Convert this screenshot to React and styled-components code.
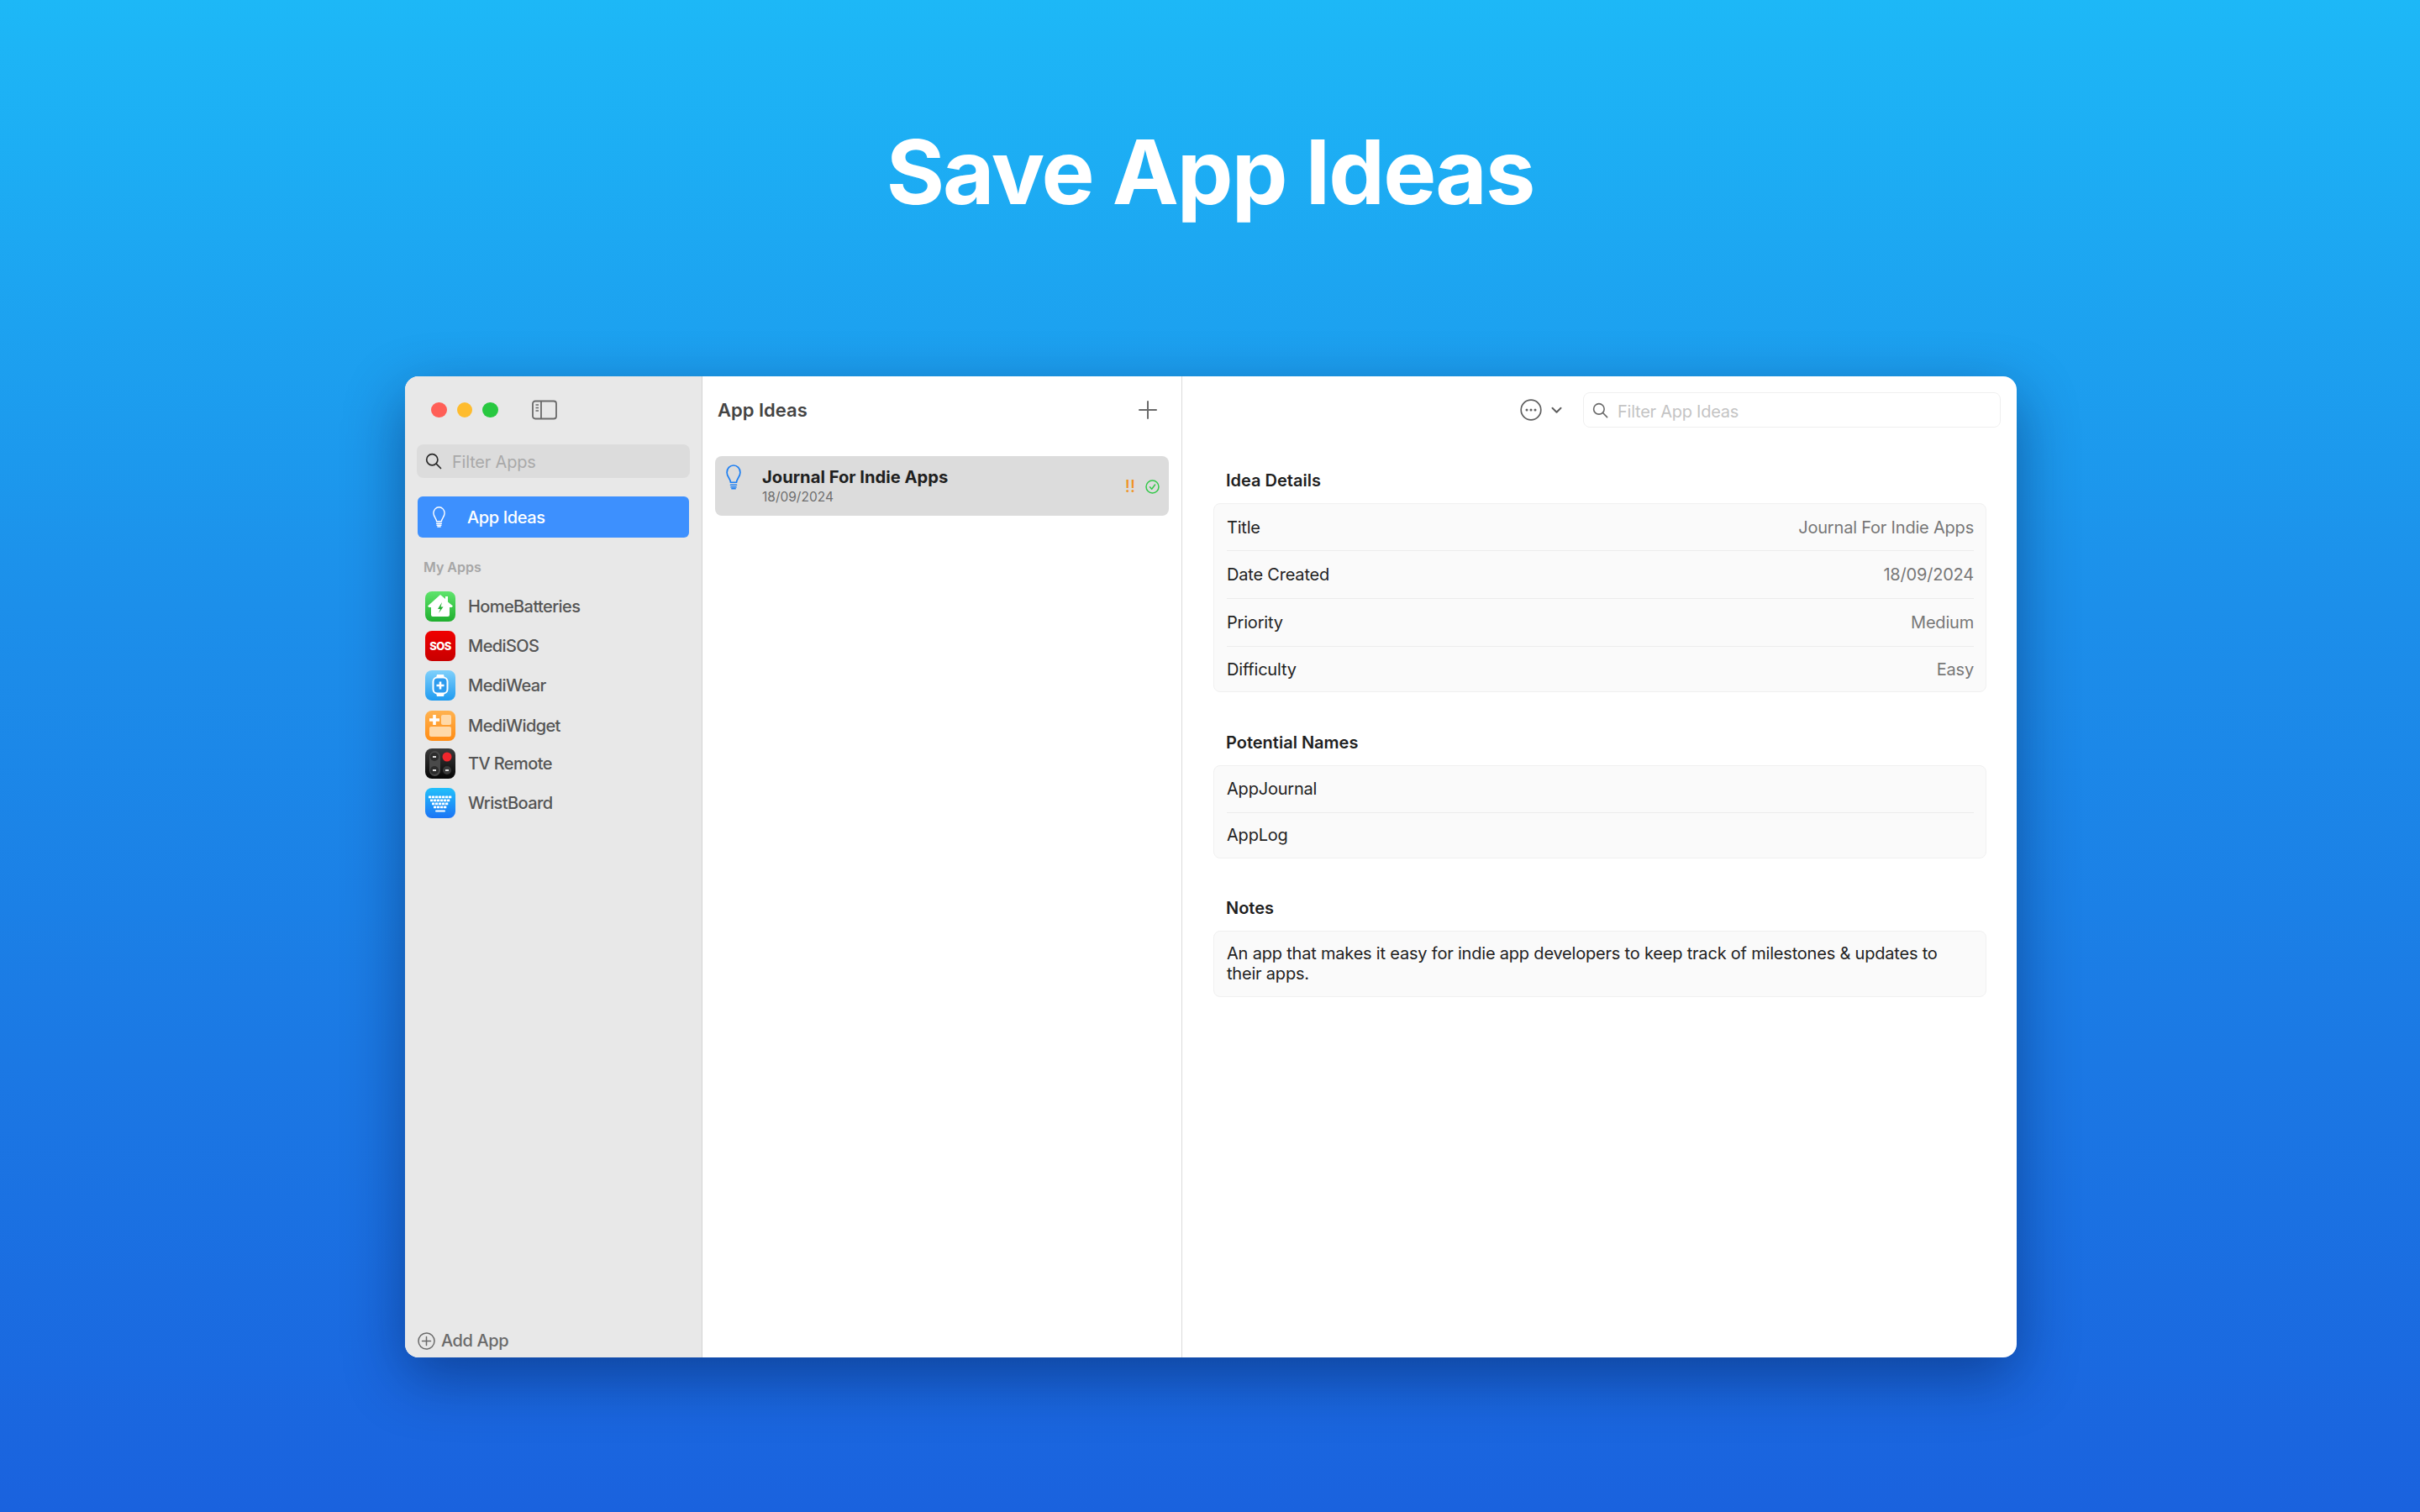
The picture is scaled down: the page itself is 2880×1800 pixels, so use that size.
import React from "react";
import styled, { createGlobalStyle } from "styled-components";

const GlobalStyle = createGlobalStyle`
  body {
    margin: 0;
    font-family: Inter, "Liberation Sans", sans-serif;
  }
`;

const apps = [
  { name: "HomeBatteries", icon: <HomeIcon /> },
  { name: "MediSOS", icon: <SosIcon /> },
  { name: "MediWear", icon: <WearIcon /> },
  { name: "MediWidget", icon: <WidgetIcon /> },
  { name: "TV Remote", icon: <RemoteIcon />, tight: true },
  { name: "WristBoard", icon: <KeyboardIcon /> },
];

const details = [
  { label: "Title", value: "Journal For Indie Apps" },
  { label: "Date Created", value: "18/09/2024" },
  { label: "Priority", value: "Medium" },
  { label: "Difficulty", value: "Easy" },
];

const names = ["AppJournal", "AppLog"];

function BulbIcon({ color, size = 18 }) {
  return (
    <svg width={size} height={size * 1.65} viewBox="0 0 18 30" fill="none" stroke={color} strokeWidth="1.7" strokeLinecap="round">
      <path d="M5.5 21.5c0-4-4.5-6.5-4.5-12C1 4.8 4.6 1 9 1s8 3.8 8 8.500c0 5.500-4.500 8-4.500 12z" />
      <path d="M5.500 24.500h7M6 27h6" />
      <path d="M7 29h4" />
    </svg>
  );
}

function SearchIcon({ color, size = 20 }) {
  return (
    <svg width={size} height={size} viewBox="0 0 20 20" fill="none" stroke={color} strokeWidth="1.7" strokeLinecap="round">
      <circle cx="8.300" cy="8.300" r="6.600" />
      <path d="M13.200 13.200l5.300 5.300" />
    </svg>
  );
}

function SidebarIcon() {
  return (
    <svg width="30" height="24" viewBox="0 0 30 24" fill="none" stroke="#6a6a6a">
      <rect x="1" y="1.500" width="28" height="21" rx="3" strokeWidth="1.800" />
      <path d="M11 1.500v21" strokeWidth="1.800" />
      <path d="M4.500 6h3.500M4.500 9.500h3.500M4.500 13h3.500" strokeWidth="1.300" />
    </svg>
  );
}

function PlusIcon() {
  return (
    <svg width="22" height="22" viewBox="0 0 22 22" stroke="#6a6a6a" strokeWidth="2" strokeLinecap="round">
      <path d="M11 1v20M1 11h20" />
    </svg>
  );
}

function MoreIcon() {
  return (
    <svg width="26" height="26" viewBox="0 0 26 26" fill="none">
      <circle cx="13" cy="13" r="11.800" stroke="#5f5f5f" strokeWidth="1.700" />
      <circle cx="8" cy="13" r="1.500" fill="#5f5f5f" />
      <circle cx="13" cy="13" r="1.500" fill="#5f5f5f" />
      <circle cx="18" cy="13" r="1.500" fill="#5f5f5f" />
    </svg>
  );
}

function ChevronIcon() {
  return (
    <svg width="13" height="9" viewBox="0 0 13 9" fill="none" stroke="#5f5f5f" strokeWidth="2" strokeLinecap="round" strokeLinejoin="round">
      <path d="M1.500 1.800l5 5 5-5" />
    </svg>
  );
}

function CheckIcon() {
  return (
    <svg width="17" height="17" viewBox="0 0 17 17" fill="none" stroke="#34c84a" strokeWidth="1.500" strokeLinecap="round" strokeLinejoin="round">
      <circle cx="8.500" cy="8.500" r="7.500" />
      <path d="M5.500 8.800l2.200 2.400 3.900-5.200" />
    </svg>
  );
}

function AddIcon() {
  return (
    <svg width="21" height="21" viewBox="0 0 21 21" fill="none" stroke="#6a6a6a" strokeWidth="1.500" strokeLinecap="round">
      <circle cx="10.500" cy="10.500" r="9.500" />
      <path d="M10.500 5.500v10M5.500 10.500h10" />
    </svg>
  );
}

function HomeIcon() {
  return (
    <svg width="36" height="36" viewBox="0 0 36 36">
      <defs>
        <linearGradient id="homeBg" x1="0" y1="0" x2="0" y2="1">
          <stop offset="0" stopColor="#5fe46c" />
          <stop offset="1" stopColor="#1fae2e" />
        </linearGradient>
      </defs>
      <rect width="36" height="36" rx="8" fill="url(#homeBg)" />
      <path d="M18 4l6 5V6h3v6.500l6 5-1.500 1.500H29v9a2 2 0 0 1-2 2H9a2 2 0 0 1-2-2v-9H4.500L3 17.500z" fill="#fff" />
      <path d="M20 13l-5 8h3l-2 5 5.500-7.500h-3z" fill="#22b033" />
    </svg>
  );
}

function SosIcon() {
  return (
    <svg width="36" height="36" viewBox="0 0 36 36">
      <defs>
        <linearGradient id="sosBg" x1="0" y1="0" x2="0" y2="1">
          <stop offset="0" stopColor="#f00000" />
          <stop offset="1" stopColor="#c80000" />
        </linearGradient>
      </defs>
      <rect width="36" height="36" rx="8" fill="url(#sosBg)" />
      <text x="18" y="22.500" textAnchor="middle" fontFamily="Inter, sans-serif" fontSize="13" fontWeight="800" fill="#fff">SOS</text>
    </svg>
  );
}

function WearIcon() {
  return (
    <svg width="36" height="36" viewBox="0 0 36 36">
      <defs>
        <linearGradient id="wearBg" x1="0" y1="0" x2="0" y2="1">
          <stop offset="0" stopColor="#7fd0fb" />
          <stop offset="1" stopColor="#1f9bf0" />
        </linearGradient>
      </defs>
      <rect width="36" height="36" rx="8" fill="url(#wearBg)" />
      <path d="M13 9l1-4h8l1 4zM13 27l1 4h8l1-4z" fill="#fff" />
      <rect x="9.500" y="8.500" width="17" height="19" rx="5" fill="#2d9bee" stroke="#fff" strokeWidth="2" />
      <path d="M18 13.500v9M13.500 18h9" stroke="#fff" strokeWidth="2.600" />
    </svg>
  );
}

function WidgetIcon() {
  return (
    <svg width="36" height="36" viewBox="0 0 36 36">
      <defs>
        <linearGradient id="widgetBg" x1="0" y1="0" x2="0" y2="1">
          <stop offset="0" stopColor="#ffb24f" />
          <stop offset="1" stopColor="#ff8c14" />
        </linearGradient>
      </defs>
      <rect width="36" height="36" rx="8" fill="url(#widgetBg)" />
      <rect x="19" y="5" width="12" height="12" rx="2" fill="#ffd9a8" />
      <rect x="5" y="19" width="26" height="12" rx="2" fill="#ffd9a8" />
      <path d="M11 5v12M5 11h12" stroke="#fff" strokeWidth="3.600" />
    </svg>
  );
}

function RemoteIcon() {
  return (
    <svg width="36" height="36" viewBox="0 0 36 36">
      <defs>
        <linearGradient id="remoteBg" x1="0" y1="0" x2="0" y2="1">
          <stop offset="0" stopColor="#3a3a3a" />
          <stop offset="1" stopColor="#050505" />
        </linearGradient>
      </defs>
      <rect width="36" height="36" rx="8" fill="url(#remoteBg)" />
      <rect x="5" y="3" width="13" height="30" rx="6.500" fill="#4a4a4a" />
      <circle cx="11" cy="10" r="5" fill="#2c2c2c" />
      <circle cx="11" cy="26" r="5" fill="#2c2c2c" />
      <circle cx="26" cy="10" r="5.500" fill="#f0262c" />
      <circle cx="26" cy="26" r="5" fill="#3a3a3a" />
      <path d="M9 10h4M9 26h4M24 26h4" stroke="#ddd" strokeWidth="1.800" />
    </svg>
  );
}

function KeyboardIcon() {
  const keys = [
    { y: 9.500, x: 4, n: 7 },
    { y: 13.500, x: 6, n: 6 },
    { y: 17.500, x: 8, n: 5 },
    { y: 21.500, x: 10, n: 4 },
  ];
  return (
    <svg width="36" height="36" viewBox="0 0 36 36">
      <defs>
        <linearGradient id="boardBg" x1="0" y1="0" x2="0" y2="1">
          <stop offset="0" stopColor="#22c0fb" />
          <stop offset="1" stopColor="#1b74f5" />
        </linearGradient>
      </defs>
      <rect width="36" height="36" rx="8" fill="url(#boardBg)" />
      {keys.map((row) =>
        Array.from({ length: row.n }).map((_, i) => (
          <rect key={`${row.y}-${i}`} x={row.x + i * 4} y={row.y} width="3.300" height="2.800" rx="0.500" fill="#fff" />
        ))
      )}
      <rect x="12" y="26.500" width="12" height="2" rx="1" fill="#fff" />
    </svg>
  );
}

export default function App() {
  return (
    <Page>
      <GlobalStyle />
      <Headline>Save App Ideas</Headline>
      <Window>
        <Sidebar>
          <TitleBar>
            <Lights>
              <Light $color="#ff5f57" />
              <Light $color="#febc2e" />
              <Light $color="#28c840" />
            </Lights>
            <SidebarIcon />
          </TitleBar>
          <SidebarSearch>
            <SearchIcon color="#2a2a2a" />
            <SidebarSearchText>Filter Apps</SidebarSearchText>
          </SidebarSearch>
          <NavItem>
            <NavIcon>
              <BulbIcon color="#fff" size={15} />
            </NavIcon>
            App Ideas
          </NavItem>
          <GroupLabel>My Apps</GroupLabel>
          <AppList>
            {apps.map((app) => (
              <AppRow key={app.name} $tight={app.tight}>
                <AppIcon>{app.icon}</AppIcon>
                {app.name}
              </AppRow>
            ))}
          </AppList>
          <AddApp>
            <AddIcon />
            Add App
          </AddApp>
        </Sidebar>

        <ListPane>
          <ListHeader>
            <ListTitle>App Ideas</ListTitle>
            <PlusIcon />
          </ListHeader>
          <IdeaRow>
            <IdeaBulb>
              <BulbIcon color="#1d7ff2" size={18} />
            </IdeaBulb>
            <IdeaText>
              <IdeaName>Journal For Indie Apps</IdeaName>
              <IdeaDate>18/09/2024</IdeaDate>
            </IdeaText>
            <IdeaStatus>
              <Priority>!!</Priority>
              <CheckIcon />
            </IdeaStatus>
          </IdeaRow>
        </ListPane>

        <DetailPane>
          <DetailToolbar>
            <MoreMenu>
              <MoreIcon />
              <ChevronIcon />
            </MoreMenu>
            <DetailSearch>
              <SearchIcon color="#6a6a6a" size={19} />
              <DetailSearchText>Filter App Ideas</DetailSearchText>
            </DetailSearch>
          </DetailToolbar>
          <DetailBody>
            <Section>
              <SectionTitle>Idea Details</SectionTitle>
              <Card>
                {details.map((row) => (
                  <CardRow key={row.label}>
                    <span>{row.label}</span>
                    <RowValue>{row.value}</RowValue>
                  </CardRow>
                ))}
              </Card>
            </Section>
            <Section>
              <SectionTitle>Potential Names</SectionTitle>
              <Card>
                {names.map((name) => (
                  <CardRow key={name}>{name}</CardRow>
                ))}
              </Card>
            </Section>
            <Section>
              <SectionTitle>Notes</SectionTitle>
              <NotesCard>
                An app that makes it easy for indie app developers to keep track of milestones &amp; updates to their apps.
              </NotesCard>
            </Section>
          </DetailBody>
        </DetailPane>
      </Window>
    </Page>
  );
}

const Page = styled.div`
  box-sizing: border-box;
  width: 2880px;
  height: 1800px;
  overflow: hidden;
  padding-left: 482px;
  background: linear-gradient(180deg, #1db8f7 0%, #1c8fea 40%, #1a62de 100%);
`;

const Headline = styled.h1`
  margin: 0 0 0 -482px;
  padding-top: 135px;
  height: 140px;
  line-height: 140px;
  text-align: center;
  font-size: 106px;
  font-weight: 700;
  letter-spacing: -2px;
  color: #fff;
`;

const Window = styled.div`
  display: flex;
  width: 1918px;
  height: 1168px;
  margin-top: 173px;
  border-radius: 16px;
  overflow: hidden;
  background: #fff;
  box-shadow: 0 24px 70px rgba(0, 20, 70, 0.45);
`;

const Sidebar = styled.aside`
  box-sizing: border-box;
  flex: 0 0 354px;
  display: flex;
  flex-direction: column;
  background: #e8e8e8;
  border-right: 1px solid #d2d2d2;
`;

const TitleBar = styled.div`
  display: flex;
  align-items: center;
  gap: 40px;
  height: 81px;
  padding: 0 0 1px 31px;
  box-sizing: border-box;
`;

const Lights = styled.div`
  display: flex;
  gap: 12px;
`;

const Light = styled.span`
  width: 18.500px;
  height: 18.500px;
  border-radius: 50%;
  background: ${(p) => p.$color};
`;

const SidebarSearch = styled.div`
  display: flex;
  align-items: center;
  gap: 12px;
  height: 40px;
  margin: 0 14px;
  padding-left: 10px;
  border-radius: 8px;
  background: #dcdcdc;
`;

const SidebarSearchText = styled.span`
  padding-top: 2px;
  font-size: 20px;
  letter-spacing: -0.2px;
  color: #a9a9a9;
`;

const NavItem = styled.div`
  display: flex;
  align-items: center;
  height: 49px;
  margin: 22px 15px 0;
  border-radius: 6px;
  background: #3d90fe;
  font-size: 20px;
  font-weight: 500;
  letter-spacing: -0.4px;
  color: #fff;
`;

const NavIcon = styled.span`
  display: flex;
  width: 59px;
  padding-left: 18px;
  box-sizing: border-box;
`;

const GroupLabel = styled.div`
  margin: 25px 0 0 22px;
  height: 20px;
  line-height: 20px;
  font-size: 16px;
  font-weight: 600;
  color: #a6a6a6;
`;

const AppList = styled.div`
  display: flex;
  flex-direction: column;
  margin-top: 13px;
`;

const AppRow = styled.div`
  display: flex;
  align-items: center;
  gap: 15px;
  height: 47.400px;
  margin-top: ${(p) => (p.$tight ? "-2.400px" : "0")};
  padding-left: 24px;
  font-size: 20px;
  font-weight: 500;
  letter-spacing: -0.6px;
  color: #555;
`;

const AppIcon = styled.span`
  display: flex;
  width: 36px;
  height: 36px;
`;

const AddApp = styled.div`
  display: flex;
  align-items: center;
  gap: 7px;
  margin-top: auto;
  height: 24px;
  padding: 0 0 8px 15px;
  font-size: 20px;
  font-weight: 500;
  letter-spacing: -0.4px;
  color: #6a6a6a;
`;

const ListPane = styled.section`
  box-sizing: border-box;
  flex: 0 0 571px;
  border-right: 1px solid #dcdcdc;
  padding: 0 15px;
`;

const ListHeader = styled.header`
  display: flex;
  align-items: center;
  justify-content: space-between;
  height: 81px;
  padding: 0 14px 1px 3px;
  box-sizing: border-box;
`;

const ListTitle = styled.h2`
  margin: 0;
  font-size: 22px;
  font-weight: 600;
  color: #444;
`;

const IdeaRow = styled.div`
  display: flex;
  align-items: center;
  height: 71px;
  margin-top: 14px;
  border-radius: 8px;
  background: #dcdcdc;
`;

const IdeaBulb = styled.span`
  display: flex;
  align-self: flex-start;
  width: 56px;
  padding: 10px 0 0 13px;
  box-sizing: border-box;
`;

const IdeaText = styled.div`
  flex: 1;
`;

const IdeaName = styled.div`
  font-size: 20.200px;
  font-weight: 700;
  line-height: 26px;
  margin-bottom: 1px;
  color: #1f1f1f;
`;

const IdeaDate = styled.div`
  font-size: 15.500px;
  line-height: 20px;
  color: #6e6e6e;
`;

const IdeaStatus = styled.div`
  display: flex;
  align-items: center;
  gap: 12px;
  padding: 1px 11px 0 0;
`;

const Priority = styled.span`
  font-size: 20px;
  font-weight: 500;
  color: #f0921e;
`;

const DetailPane = styled.section`
  flex: 1;
  min-width: 0;
`;

const DetailToolbar = styled.div`
  display: flex;
  align-items: center;
  justify-content: flex-end;
  padding: 19px 19px 0 0;
`;

const MoreMenu = styled.div`
  display: flex;
  align-items: center;
  gap: 11px;
  margin-right: 25px;
`;

const DetailSearch = styled.div`
  box-sizing: border-box;
  display: flex;
  align-items: center;
  gap: 11px;
  width: 497px;
  height: 42px;
  padding-left: 10px;
  border: 1px solid #efefef;
  border-radius: 8px;
`;

const DetailSearchText = styled.span`
  padding-top: 3px;
  font-size: 20px;
  letter-spacing: -0.25px;
  color: #c4c4c4;
`;

const DetailBody = styled.div`
  display: flex;
  flex-direction: column;
  gap: 47.500px;
  padding: 51px 36px 0 37px;
`;

const Section = styled.div``;

const SectionTitle = styled.h3`
  margin: 0 0 15px 15px;
  height: 24px;
  line-height: 24px;
  font-size: 20px;
  font-weight: 600;
  color: #1f1f1f;
`;

const Card = styled.div`
  box-sizing: border-box;
  padding: 0 14px 0 15px;
  background: #fafafa;
  border: 1px solid #f0f0f0;
  border-radius: 8px;
`;

const CardRow = styled.div`
  box-sizing: border-box;
  display: flex;
  align-items: center;
  justify-content: space-between;
  height: 57px;
  border-bottom: 1px solid #ececec;
  font-size: 20px;
  letter-spacing: -0.2px;
  color: #222;
  &:first-child {
    height: 56px;
  }
  &:last-child {
    height: 53px;
    border-bottom: none;
  }
`;

const RowValue = styled.span`
  color: #777;
`;

const NotesCard = styled.div`
  box-sizing: border-box;
  height: 79px;
  padding: 14px 15px;
  background: #fafafa;
  border: 1px solid #f0f0f0;
  border-radius: 8px;
  font-size: 20px;
  line-height: 24px;
  letter-spacing: -0.2px;
  color: #222;
`;
